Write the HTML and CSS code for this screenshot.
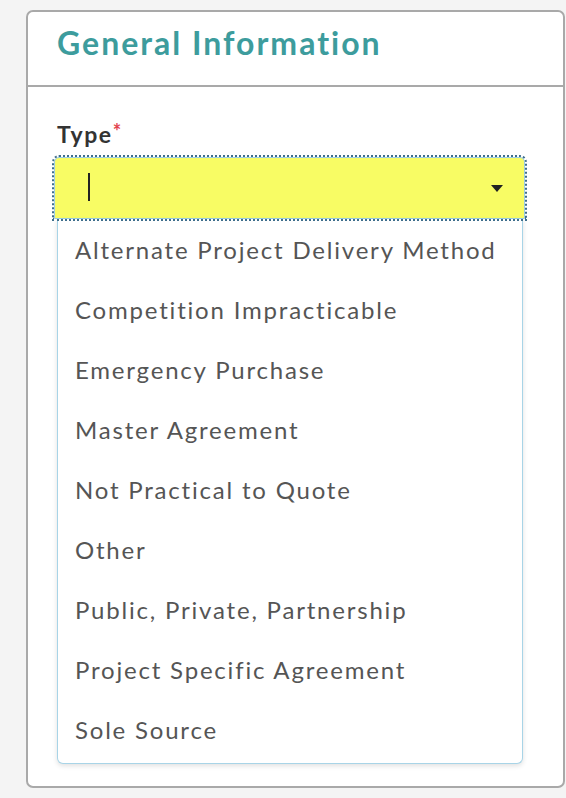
FILE: index.html
```html
<!DOCTYPE html>
<html lang="en">
<head>
<meta charset="utf-8">
<title>General Information</title>
<link rel="stylesheet" href="styles.css">
</head>
<body>
  <section class="card">
    <header class="card-header">
      <h2 class="card-title">General Information</h2>
    </header>
    <div class="card-body">
      <label class="field-label" for="type-input">Type<span class="required">*</span></label>
      <div class="combo">
        <div class="combo-input">
          <span class="caret"></span>
          <svg class="combo-arrow" width="12" height="7" viewBox="0 0 12 7"><path d="M0 0h12L6 7z" fill="#222"/></svg>
        </div>
        <ul class="combo-menu">
          <li>Alternate Project Delivery Method</li>
          <li>Competition Impracticable</li>
          <li>Emergency Purchase</li>
          <li>Master Agreement</li>
          <li>Not Practical to Quote</li>
          <li>Other</li>
          <li>Public, Private, Partnership</li>
          <li>Project Specific Agreement</li>
          <li>Sole Source</li>
        </ul>
      </div>
    </div>
  </section>
</body>
</html>
```
FILE: styles.css
```css
html, body {
  margin: 0;
  padding: 0;
}

body {
  background: #f4f4f4;
  font-family: Lato, "Open Sans", sans-serif;
  padding: 10px 0 0 26px;
  height: 798px;
  box-sizing: border-box;
}

.card {
  width: 539px;
  height: 778px;
  box-sizing: border-box;
  background: #fff;
  border: 2px solid #a9a9a9;
  border-radius: 7px;
}

.card-header {
  height: 75px;
  box-sizing: border-box;
  border-bottom: 2px solid #a9a9a9;
  padding: 12px 0 0 29px;
}

.card-title {
  margin: 0;
  font-size: 32px;
  line-height: 1.2;
  font-weight: 700;
  color: #3d9c9d;
  letter-spacing: 2px;
}

.card-body {
  padding: 33px 0 0 26px;
}

.field-label {
  display: block;
  font-size: 23px;
  font-weight: 700;
  color: #333;
  margin: 0 0 9px 3px;
  line-height: 28px;
  letter-spacing: 1.6px;
}

.required {
  color: #e2434d;
  font-size: 20px;
  vertical-align: top;
  margin-left: 0;
  position: relative;
  top: -3px;
}

.combo {
  width: 471px;
}

.combo-input {
  height: 62px;
  box-sizing: border-box;
  background: #f8fc64;
  border: 1px solid #9ccde3;
  outline: 2px dotted #3f6f8c;
  outline-offset: 0;
  border-radius: 5px 5px 0 0;
  display: flex;
  align-items: center;
  justify-content: space-between;
  padding: 0 21px 0 33px;
}

.caret {
  width: 2px;
  height: 28px;
  background: #222;
  margin-top: -2px;
}

.combo-arrow {
  display: block;
  margin-top: 1px;
}

.combo-menu {
  list-style: none;
  margin: 0 2px 0 3px;
  padding: 1px 0 3px;
  background: #fff;
  border: 1px solid #a8d4e7;
  border-top: none;
  border-radius: 0 0 6px 6px;
  box-shadow: 0 2px 5px rgba(0, 0, 0, 0.12);
}

.combo-menu li {
  height: 60px;
  line-height: 60px;
  padding-left: 17px;
  font-size: 24px;
  color: #555;
  white-space: nowrap;
  letter-spacing: 1.8px;
}
```
